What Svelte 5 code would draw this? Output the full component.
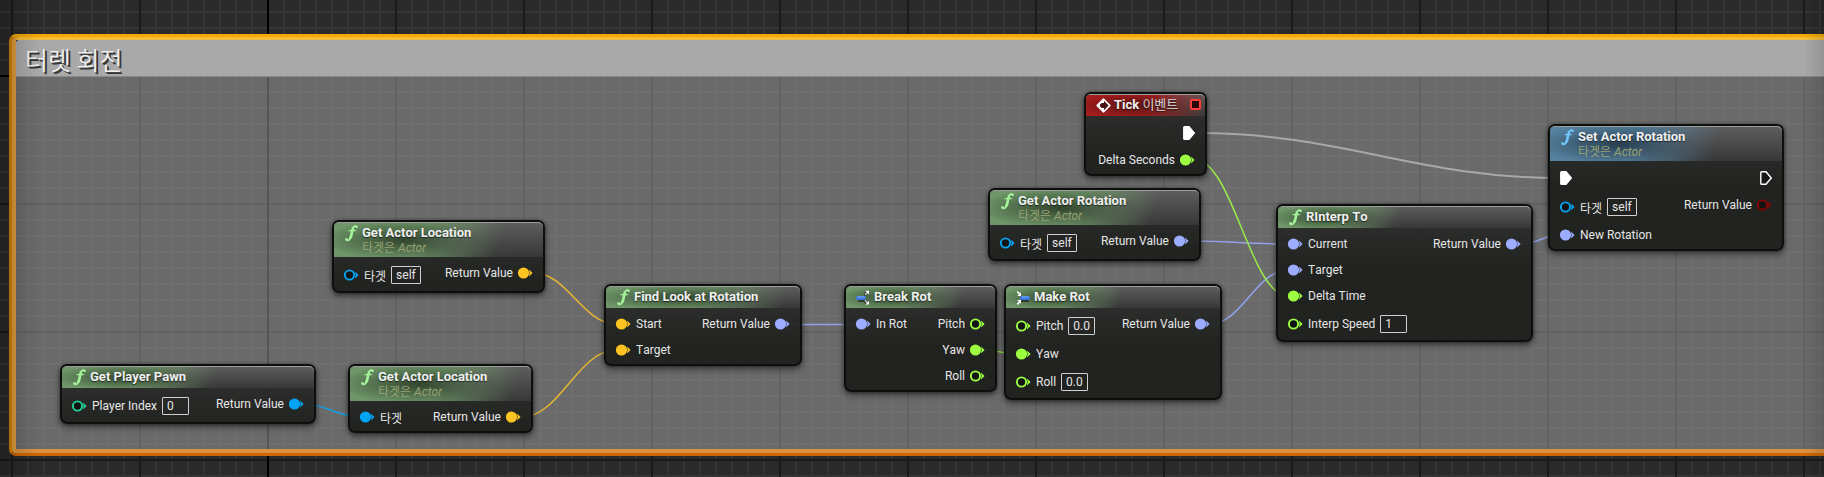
<script lang="ts">
  type Pin = { kind?: 'data' | 'exec'; label?: string; color?: string; on?: boolean; value?: string; self?: boolean };
  type GraphNode = {
    id: string; x: number; y: number; w: number; title: string; suffix?: string; sub?: boolean;
    icon: 'func' | 'break' | 'make' | 'event'; tone?: string; left: Pin[]; right: Pin[];
  };

  const yellow = '#ffc422';
  const blue = '#00a4f4';
  const lilac = '#9cacff';
  const lime = '#9cff42';
  const teal = '#1fd09a';
  const red = '#8c0202';

  const nodes: GraphNode[] = [
    { id: 'location-a', x: 332, y: 220, w: 213, title: 'Get Actor Location', sub: true, icon: 'func',
      left: [{ label: '타겟', color: blue, self: true }], right: [{ label: 'Return Value', color: yellow, on: true }] },
    { id: 'pawn', x: 60, y: 364, w: 256, title: 'Get Player Pawn', icon: 'func',
      left: [{ label: 'Player Index', color: teal, value: '0' }], right: [{ label: 'Return Value', color: blue, on: true }] },
    { id: 'location-b', x: 348, y: 364, w: 185, title: 'Get Actor Location', sub: true, icon: 'func',
      left: [{ label: '타겟', color: blue, on: true }], right: [{ label: 'Return Value', color: yellow, on: true }] },
    { id: 'look-at', x: 604, y: 284, w: 198, title: 'Find Look at Rotation', icon: 'func',
      left: [{ label: 'Start', color: yellow, on: true }, { label: 'Target', color: yellow, on: true }],
      right: [{ label: 'Return Value', color: lilac, on: true }] },
    { id: 'break-rot', x: 844, y: 284, w: 153, title: 'Break Rot', icon: 'break',
      left: [{ label: 'In Rot', color: lilac, on: true }],
      right: [{ label: 'Pitch', color: lime }, { label: 'Yaw', color: lime, on: true }, { label: 'Roll', color: lime }] },
    { id: 'make-rot', x: 1004, y: 284, w: 218, title: 'Make Rot', icon: 'make',
      left: [{ label: 'Pitch', color: lime, value: '0.0' }, { label: 'Yaw', color: lime, on: true }, { label: 'Roll', color: lime, value: '0.0' }],
      right: [{ label: 'Return Value', color: lilac, on: true }] },
    { id: 'rotation', x: 988, y: 188, w: 213, title: 'Get Actor Rotation', sub: true, icon: 'func',
      left: [{ label: '타겟', color: blue, self: true }], right: [{ label: 'Return Value', color: lilac, on: true }] },
    { id: 'tick', x: 1084, y: 92, w: 123, title: 'Tick', suffix: '이벤트', icon: 'event', tone: 'red',
      left: [], right: [{ kind: 'exec', on: true }, { label: 'Delta Seconds', color: lime, on: true }] },
    { id: 'rinterp', x: 1276, y: 204, w: 257, title: 'RInterp To', icon: 'func',
      left: [{ label: 'Current', color: lilac, on: true }, { label: 'Target', color: lilac, on: true },
        { label: 'Delta Time', color: lime, on: true }, { label: 'Interp Speed', color: lime, value: '1' }],
      right: [{ label: 'Return Value', color: lilac, on: true }] },
    { id: 'set-rotation', x: 1548, y: 124, w: 236, title: 'Set Actor Rotation', sub: true, icon: 'func', tone: 'blue',
      left: [{ kind: 'exec', on: true }, { label: '타겟', color: blue, self: true }, { label: 'New Rotation', color: lilac, on: true }],
      right: [{ kind: 'exec' }, { label: 'Return Value', color: red }] }
  ];

  // Each wire: start point, end point, colour, thickness
  const wires: [number, number, number, number, string, number][] = [
    [534, 273, 616, 324, '#e8b730', 1.5],
    [522, 417, 616, 350, '#e8b730', 1.5],
    [304, 404, 360, 417, '#14a0e6', 1.5],
    [790, 324.5, 856, 324.5, '#93a2ea', 1.5],
    [985, 350, 1016, 354, '#8fe040', 1.5],
    [1210, 324, 1288, 270, '#93a2ea', 1.5],
    [1189, 241, 1288, 244, '#93a2ea', 1.5],
    [1195, 160, 1288, 296, '#98ea48', 1.5],
    [1521, 244, 1560, 235, '#93a2ea', 1.5],
    [1197, 133, 1560, 178, '#a8a8a8', 2]
  ];

  function curve(x1: number, y1: number, x2: number, y2: number) {
    const c = (x2 - x1) * 0.4;
    return `M${x1} ${y1}C${x1 + c} ${y1} ${x2 - c} ${y2} ${x2} ${y2}`;
  }
</script>

{#snippet pinIcon(p: Pin)}
  {#if p.kind === 'exec'}
    <svg class="exec" viewBox="0 0 12 14" width="12" height="14" aria-hidden="true">
      <path d="M1.6.8H6L11.2 7 6 13.2H1.6Q.8 13.2.8 12.4V1.6Q.8.8 1.6.8Z" fill={p.on ? '#fff' : '#161816'} stroke="#fff" stroke-width="1.4" />
    </svg>
  {:else}
    <svg class="dot" viewBox="0 0 15 12" width="15" height="12" aria-hidden="true">
      <path d="M11 2.4 14.6 6 11 9.6Q12.2 6 11 2.4Z" fill={p.color} />
      {#if p.on}
        <circle cx="5.5" cy="6" r="5.6" fill={p.color} />
      {:else}
        <circle cx="5.5" cy="6" r="4.6" fill="#121412" stroke={p.color} stroke-width="1.9" />
      {/if}
    </svg>
  {/if}
{/snippet}

{#snippet nodeIcon(kind: string)}
  <svg class="icon" viewBox="0 0 16 18" width="16" height="18" aria-hidden="true">
    {#if kind === 'func'}
      <g fill="none" stroke="currentColor" stroke-linecap="round">
        <path d="M13.6 2.8Q12.2 1.2 10.6 3Q9.6 4.6 8.8 9Q8 13.6 6.6 15.4Q5 17 3.2 15.8" stroke-width="1.7" />
        <path d="M9.8 4.6Q9 7.4 8.6 10T7.2 13.8" stroke-width="2.6" />
        <path d="M6 6.6H12.4" stroke-width="1.4" />
      </g>
      <circle cx="13.4" cy="2.8" r="1.3" fill="currentColor" /><circle cx="3.6" cy="15.4" r="1.3" fill="currentColor" />
    {:else if kind === 'break'}
      <rect x="3" y="12" width="9" height="2" rx="1" fill="#111" opacity=".6" />
      <rect x="1" y="8" width="10" height="4" rx="1.8" fill="#3a76dc" /><path d="M2.4 9H9.6" stroke="#86b4fa" />
      <path d="M9.4 7.2 12 4.8M9.8 13 12.4 15.4" stroke="#1d231d" stroke-width="2.4" />
      <path d="M10 6.8 12.6 4.4M10 12.6 12.6 15" stroke="#dfe6e0" stroke-width="1.3" />
      <path d="M10.4 2.8H14V6.4ZM10.4 16.6H14V13Z" fill="#fff" />
    {:else if kind === 'make'}
      <rect x="5" y="12" width="9" height="2" rx="1" fill="#111" opacity=".6" />
      <rect x="5" y="8" width="10" height="4" rx="1.8" fill="#3a76dc" /><path d="M6.4 9H13.6" stroke="#86b4fa" />
      <path d="M2.2 3.6 4.6 6M2.2 16.4 4.6 14" stroke="#fff" stroke-width="1.6" />
      <path d="M6 4.2V8H2.2ZM6 15.8V12H2.2Z" fill="#fff" />
    {:else}
      <path d="M8.5 3 15 9.5 8.5 16 2 9.5Z" fill="#fff" stroke="#fff" stroke-width="1.4" stroke-linejoin="round" />
      <path d="M9 4.8 13.6 9.5 9 14.2V12H6.8L5 10.4V8.6L6.8 7H9Z" fill="#4a1212" />
    {/if}
  </svg>
{/snippet}

{#snippet pinRow(n: GraphNode, p: Pin, i: number, side: string)}
  <div class="pin {side}" class:tall={p.value !== undefined || p.self} class:flow={p.kind === 'exec'}>
    {#if side === 'in'}{@render pinIcon(p)}{/if}
    {#if p.value !== undefined}
      <label for="{n.id}-{i}">{p.label}</label>
      <input id="{n.id}-{i}" type="text" value={p.value} />
    {:else if p.label}
      <span>{p.label}</span>
      {#if p.self}<span class="self">self</span>{/if}
    {/if}
    {#if side === 'out'}{@render pinIcon(p)}{/if}
  </div>
{/snippet}

<main class="graph">
  <section class="comment">
    <h1>터렛 회전</h1>
    <div class="area"></div>
  </section>

  <svg class="wires" aria-hidden="true">
    {#each wires as [x1, y1, x2, y2, color, width]}
      <path d={curve(x1, y1, x2, y2)} stroke={color} stroke-width={width} fill="none" />
    {/each}
  </svg>

  <div class="vignette"></div>

  {#each nodes as n (n.id)}
    <article class="node {n.tone ?? 'green'}" style="left:{n.x}px;top:{n.y}px;width:{n.w}px">
      <header class:double={n.sub}>
        <div class="heading">
          {@render nodeIcon(n.icon)}
          <div class="titles">
            <h2>{n.title}{#if n.suffix}<span class="suffix">{' '}{n.suffix}</span>{/if}</h2>
            {#if n.sub}<p>타겟은 <i>Actor</i></p>{/if}
          </div>
        </div>
        {#if n.icon === 'event'}<span class="delegate"></span>{/if}
      </header>
      <div class="body">
        <div class="col">{#each n.left as p, i}{@render pinRow(n, p, i, 'in')}{/each}</div>
        <div class="col">{#each n.right as p, i}{@render pinRow(n, p, i, 'out')}{/each}</div>
      </div>
    </article>
  {/each}
</main>

<style>
  :global(body) {
    background: #2a2a2a;
  }
  .graph {
    position: relative;
    box-sizing: border-box;
    height: 100vh;
    padding: 34px 0 21px 9px;
    overflow: hidden;
    display: flex;
    font-family: Roboto, 'Noto Sans CJK KR', sans-serif;
    font-size: 12px;
    font-kerning: none;
    color: #e6e6e6;
    background-color: #2a2a2a;
    background-image:
      linear-gradient(#000, #000),
      linear-gradient(#000, #000),
      linear-gradient(90deg, #1a1a1a 2px, transparent 2px),
      linear-gradient(#1a1a1a 2px, transparent 2px),
      linear-gradient(90deg, #353535 2px, transparent 2px),
      linear-gradient(#353535 2px, transparent 2px);
    background-size: 2px 100%, 100% 2px, 128px 128px, 128px 128px, 16px 16px, 16px 16px;
    background-position: 267px 0, 0 75px, 11px 0, 0 75px, 11px 0, 0 11px;
    background-repeat: no-repeat, no-repeat, repeat, repeat, repeat, repeat;
  }
  .comment {
    flex: 1;
    display: flex;
    flex-direction: column;
    box-sizing: border-box;
    border: 3px solid;
    border-color: #f4a800 #cc7600 #cc6600 #d08000;
    border-right: 0;
    border-radius: 7px 0 0 7px;
    padding: 3px 0 4px 4px;
    box-shadow: inset 4px 0 0 #dc9c3c, inset 0 3px 0 #f6bc3a, inset 0 -4px 0 #dc913f;
  }
  h1 {
    margin: 0;
    height: 37px;
    box-sizing: border-box;
    padding-left: 9px;
    font: 350 25px/38px 'Noto Sans CJK KR', sans-serif;
    color: #f0f0f0;
    text-shadow: 1px 1px 0 #444, 2px 2px 0 #333;
    background: #a9a9a9;
    border-bottom: 1px solid #8a8a8a;
    border-radius: 3px 0 0 0;
  }
  .area {
    flex: 1;
    background: rgba(170, 170, 170, 0.5);
  }
  .wires {
    position: absolute;
    inset: 0;
    width: 100%;
    height: 100%;
  }
  .vignette {
    position: absolute;
    inset: 0;
    pointer-events: none;
    background:
      linear-gradient(90deg, rgba(0, 0, 0, 0.2), transparent 40px),
      linear-gradient(270deg, rgba(0, 0, 0, 0.12), transparent 20px);
  }
  .node {
    position: absolute;
    box-sizing: border-box;
    border: 2px solid #0d0f0d;
    border-radius: 7px;
    background: linear-gradient(rgba(46, 47, 46, 0.93), rgba(30, 32, 29, 0.96) 60px);
    box-shadow: 0 3px 6px rgba(0, 0, 0, 0.5), 0 0 3px rgba(0, 0, 0, 0.4);
  }
  .green { --tone: #6f9769; --ink: #a5f29c; --core: rgba(35, 48, 32, 0.8); }
  .blue { --tone: #56819f; --ink: #6cc6fa; --core: rgba(27, 45, 58, 0.8); }
  .red { --tone: #a51c1c; --ink: #fff; --core: rgba(60, 20, 20, 0.75); }
  header {
    position: relative;
    height: 22px;
    display: flex;
    overflow: hidden;
    border-radius: 5px 5px 0 0;
    background: linear-gradient(#5e5e5e, #383838);
    box-shadow: inset 0 1px 0 rgba(255, 255, 255, 0.4);
  }
  header.double {
    height: 35px;
  }
  .heading {
    position: relative;
    display: flex;
    gap: 3px;
    padding: 1px 32px 0 9px;
    white-space: nowrap;
  }
  .heading::before {
    content: '';
    position: absolute;
    inset: 1px 0 0 0;
    background: radial-gradient(ellipse 50% 60% at 42% 50%, var(--core), transparent), var(--tone);
    -webkit-mask-image: linear-gradient(110deg, #000 50%, transparent 96%);
    mask-image: linear-gradient(110deg, #000 50%, transparent 96%);
  }
  .icon,
  .titles {
    position: relative;
    flex: none;
  }
  .icon {
    color: var(--ink);
    margin-top: 1px;
  }
  h2,
  p {
    margin: 0;
  }
  h2 {
    font-size: 13px;
    line-height: 20px;
    height: 18px;
    font-weight: 700;
    color: #f0f0f0;
    text-shadow: 0 1px 1px rgba(0, 0, 0, 0.6);
  }
  .suffix {
    font-weight: 350;
    color: #e0e0e0;
  }
  p {
    font-size: 12px;
    line-height: 14px;
    font-weight: 400;
    color: #98a274;
  }
  .delegate {
    position: absolute;
    right: 4px;
    top: 5px;
    width: 7px;
    height: 7px;
    border: 2px solid #ff3c3c;
    border-radius: 2px;
    background: #260606;
  }
  .body {
    display: flex;
    justify-content: space-between;
    padding: 3px 10px 1px;
  }
  .pin {
    height: 26px;
    display: flex;
    align-items: center;
    gap: 5px;
    white-space: nowrap;
  }
  .pin.tall {
    height: 30px;
  }
  .pin.flow {
    height: 28px;
  }
  .out {
    justify-content: flex-end;
  }
  .pin svg {
    flex: none;
  }
  input,
  .self {
    box-sizing: border-box;
    height: 18px;
    border: 1px solid #d0d0d0;
    border-radius: 1px;
    padding: 0 4px;
    background: transparent;
    color: inherit;
    font: inherit;
    font-kerning: none;
    line-height: 16px;
  }
  input {
    width: 27px;
    outline: none;
  }
</style>
